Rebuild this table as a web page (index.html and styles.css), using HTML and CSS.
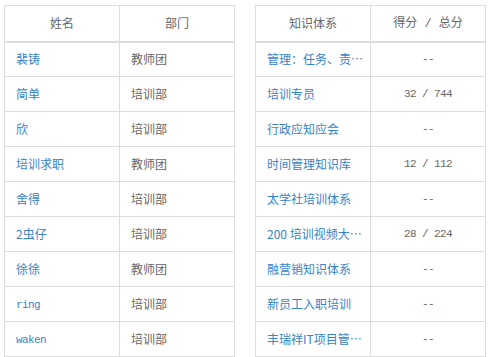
FILE: index.html
```html
<!DOCTYPE html>
<html>
<head>
<meta charset="utf-8">
<link rel="stylesheet" href="styles.css">
</head>
<body>
<div class="wrap">
  <table class="grid">
    <thead>
      <tr><th>姓名</th><th>部门</th></tr>
    </thead>
    <tbody>
      <tr><td><a class="lnk">裴铸</a></td><td>教师团</td></tr>
      <tr><td><a class="lnk">简单</a></td><td>培训部</td></tr>
      <tr><td><a class="lnk">欣</a></td><td>培训部</td></tr>
      <tr><td><a class="lnk">培训求职</a></td><td>教师团</td></tr>
      <tr><td><a class="lnk">舍得</a></td><td>培训部</td></tr>
      <tr><td><a class="lnk">2虫仔</a></td><td>培训部</td></tr>
      <tr><td><a class="lnk">徐徐</a></td><td>教师团</td></tr>
      <tr><td><a class="lnk mono">ring</a></td><td>培训部</td></tr>
      <tr><td><a class="lnk mono">waken</a></td><td>培训部</td></tr>
    </tbody>
  </table>
  <table class="grid">
    <thead>
      <tr><th>知识体系</th><th>得分<span class="sep"> / </span>总分</th></tr>
    </thead>
    <tbody>
      <tr><td><a class="lnk">管理：任务、责…</a></td><td class="num">--</td></tr>
      <tr><td><a class="lnk">培训专员</a></td><td class="num">32 / 744</td></tr>
      <tr><td><a class="lnk">行政应知应会</a></td><td class="num">--</td></tr>
      <tr><td><a class="lnk">时间管理知识库</a></td><td class="num">12 / 112</td></tr>
      <tr><td><a class="lnk">太学社培训体系</a></td><td class="num">--</td></tr>
      <tr><td><a class="lnk">200 培训视频大…</a></td><td class="num">28 / 224</td></tr>
      <tr><td><a class="lnk">融营销知识体系</a></td><td class="num">--</td></tr>
      <tr><td><a class="lnk">新员工入职培训</a></td><td class="num">--</td></tr>
      <tr><td><a class="lnk">丰瑞祥IT项目管…</a></td><td class="num">--</td></tr>
    </tbody>
  </table>
</div>
</body>
</html>
```

FILE: styles.css
```css
html, body {
  margin: 0;
  padding: 0;
  background: #fff;
}
body {
  padding: 5px 0 0 4px;
  font-family: "Noto Sans CJK SC", "Liberation Sans", sans-serif;
  font-size: 12px;
  color: #666;
}
.wrap {
  display: flex;
  gap: 20px;
  align-items: flex-start;
}
.grid {
  border-collapse: collapse;
  table-layout: fixed;
  width: 231px;
  border: 1px solid #ddd;
}
.grid th, .grid td {
  border: 1px solid #ddd;
  padding: 0;
  line-height: 14px;
  box-sizing: border-box;
}
.grid th {
  font-weight: normal;
  text-align: center;
  color: #666;
  border-bottom: 2px solid #ddd;
  height: 36px;
}
.sep {
  font-family: "Liberation Mono", monospace;
  font-size: 12px;
  white-space: pre;
}
.grid td {
  padding: 0 4px 0 11px;
  text-align: left;
  height: 35px;
  white-space: nowrap;
  overflow: hidden;
}
.grid td.num {
  padding: 0;
  text-align: center;
  font-family: "Liberation Mono", "Noto Sans CJK SC", monospace;
  font-size: 11px;
  letter-spacing: -0.6px;
  color: #666;
}
.lnk {
  color: #3783c8;
  text-decoration: none;
}
.mono {
  font-family: "Liberation Mono", monospace;
  font-size: 11px;
  letter-spacing: -0.6px;
}
```
